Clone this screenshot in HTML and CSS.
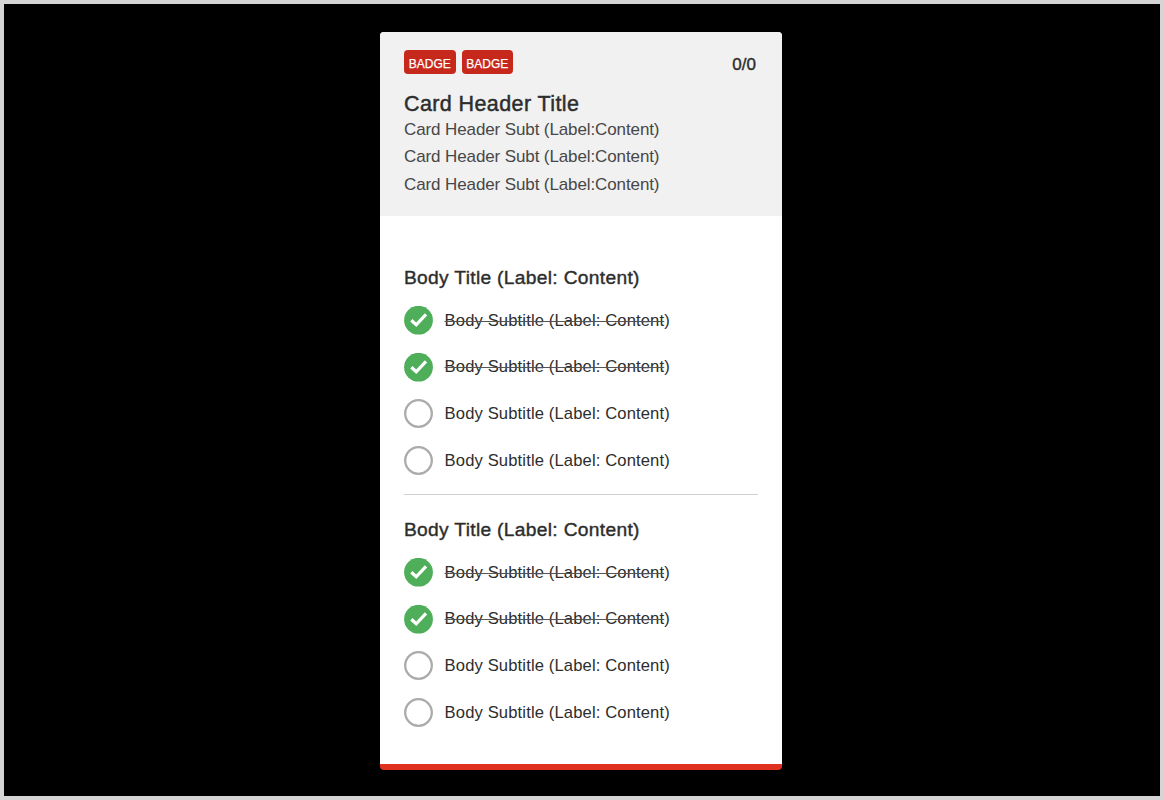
FILE: index.html
```html
<!DOCTYPE html>
<html lang="en">
<head>
<meta charset="utf-8">
<title>Card</title>
<link rel="stylesheet" href="styles.css">
</head>
<body>
<svg class="defs" width="0" height="0">
  <symbol id="done" viewBox="0 0 29 29"><circle cx="14.5" cy="14.2" r="14.4" fill="#4eae59"/><path d="M7.3 14.3 12.2 18.8 22 8.4" fill="none" stroke="#fff" stroke-width="3.2"/></symbol>
  <symbol id="open" viewBox="0 0 29 29"><circle cx="14.5" cy="14.5" r="13.3" fill="#fff" stroke="#ababab" stroke-width="2.3"/></symbol>
</svg>
<main class="card">
  <header class="card-header">
    <div class="top">
      <div class="badges"><span class="badge">BADGE</span><span class="badge">BADGE</span></div>
      <span class="count">0/0</span>
    </div>
    <h1 class="title"><span>Card Header Title</span></h1>
    <p class="meta">Card Header Subt (Label:Content)</p>
    <p class="meta">Card Header Subt (Label:Content)</p>
    <p class="meta">Card Header Subt (Label:Content)</p>
  </header>
  <div class="card-body">
    <section class="group">
      <h2 class="group-title">Body Title (Label: Content)</h2>
      <ul class="list">
        <li class="item done"><svg class="icon"><use href="#done"/></svg><span class="label"><s>Body Subtitle (Label: Content</s>)</span></li>
        <li class="item done"><svg class="icon"><use href="#done"/></svg><span class="label"><s>Body Subtitle (Label: Content</s>)</span></li>
        <li class="item"><svg class="icon"><use href="#open"/></svg><span class="label">Body Subtitle (Label: Content)</span></li>
        <li class="item"><svg class="icon"><use href="#open"/></svg><span class="label">Body Subtitle (Label: Content)</span></li>
      </ul>
    </section>
    <section class="group">
      <h2 class="group-title">Body Title (Label: Content)</h2>
      <ul class="list">
        <li class="item done"><svg class="icon"><use href="#done"/></svg><span class="label"><s>Body Subtitle (Label: Content</s>)</span></li>
        <li class="item done"><svg class="icon"><use href="#done"/></svg><span class="label"><s>Body Subtitle (Label: Content</s>)</span></li>
        <li class="item"><svg class="icon"><use href="#open"/></svg><span class="label">Body Subtitle (Label: Content)</span></li>
        <li class="item"><svg class="icon"><use href="#open"/></svg><span class="label">Body Subtitle (Label: Content)</span></li>
      </ul>
    </section>
  </div>
</main>
</body>
</html>
```
FILE: styles.css
```css
* { box-sizing: border-box; margin: 0; padding: 0; }
body {
  height: 800px;
  padding: 28px 0 0 376px;
  border: 4px solid #d5d5d5;
  background: #000;
  font-family: "Liberation Sans", Arial, sans-serif;
  color: #2d2d2d;
  overflow: hidden;
}
.defs { display: none; }
.card {
  display: flex;
  flex-direction: column;
  width: 402px;
  height: 738px;
  border-radius: 4px;
  background: #fff;
  border-bottom: 6px solid #df3020;
  overflow: hidden;
}
.card-header { height: 183.5px; padding: 18px 24px 0; background: #f1f1f1; }
.top { display: flex; justify-content: space-between; height: 24px; }
.badges { display: flex; gap: 6px; }
.badge {
  width: 51.5px;
  height: 24px;
  border-radius: 4px;
  background: #c6281c;
  color: #fff;
  font-size: 12px;
  line-height: 28px;
  text-align: center;
  -webkit-text-stroke: 0.25px;
}
.count { padding-right: 2px; font-size: 17px; line-height: 30px; -webkit-text-stroke: 0.4px; }
.title { margin-top: 16px; height: 25.5px; font-size: 21.5px; font-weight: 400; line-height: 29px; letter-spacing: 0.4px; -webkit-text-stroke: 0.45px; }
.meta { color: #474747; font-size: 17px; line-height: 27.5px; letter-spacing: -0.11px; }
.card-body { flex: 1; padding: 36.5px 24px 0; }
.group { height: 252px; }
.group:first-child { height: 242.5px; border-bottom: 1px solid #d0d0d0; }
.group + .group { padding-top: 9.5px; }
.group-title { height: 38px; padding-top: 13px; font-size: 19.2px; font-weight: 400; line-height: 26px; letter-spacing: 0.32px; -webkit-text-stroke: 0.4px; }
.list { padding-top: 6.35px; list-style: none; }
.item { display: flex; align-items: center; gap: 11.6px; height: 46.7px; }
.icon { width: 29px; height: 29px; margin-top: 1.4px; }
.label { margin-top: 2px; font-size: 16.6px; line-height: 20px; letter-spacing: 0.13px; }
.label s { text-decoration-thickness: 1px; text-decoration-color: #555; }
```
